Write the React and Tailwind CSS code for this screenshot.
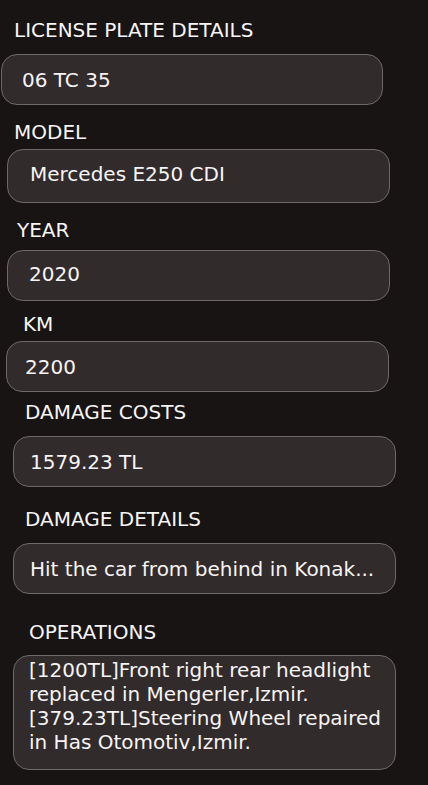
import React from 'react'

const fields = [
  { label: 'LICENSE PLATE DETAILS', value: '06 TC 35', labelCls: 'mt-[18px] ml-[14px]', boxCls: 'mt-[12px] ml-[1px] w-[382px] h-[51px] pl-[20px]' },
  { label: 'MODEL', value: 'Mercedes E250 CDI', labelCls: 'mt-[15px] ml-[14px]', boxCls: 'mt-[5px] ml-[7px] w-[383px] h-[54px] pl-[22px] pb-[4px]' },
  { label: 'YEAR', value: '2020', labelCls: 'mt-[15px] ml-[17px]', boxCls: 'mt-[8px] ml-[7px] w-[383px] h-[51px] pl-[21px] pb-[4px]' },
  { label: 'KM', value: '2200', labelCls: 'mt-[11px] ml-[23px]', boxCls: 'mt-[5px] ml-[6px] w-[383px] h-[51px] pl-[18px]' },
  { label: 'DAMAGE COSTS', value: '1579.23 TL', labelCls: 'mt-[8px] ml-[25px]', boxCls: 'mt-[12px] ml-[13px] w-[383px] h-[51px] pl-[16px]' },
  { label: 'DAMAGE DETAILS', value: 'Hit the car from behind in Konak...', labelCls: 'mt-[20px] ml-[25px]', boxCls: 'mt-[12px] ml-[13px] w-[383px] h-[51px] pl-[16px] pr-[8px]' },
]

export default function App() {
  return (
    <div className="min-h-screen bg-[#181414] text-[#f6f4f4] font-['DejaVu_Sans',sans-serif] text-[20px] leading-[24px] flex flex-col items-start pb-4">
      {fields.map((f) => (
        <React.Fragment key={f.label}>
          <div className={f.labelCls}>{f.label}</div>
          <div className={`${f.boxCls} flex items-center bg-[#322b2c] border border-[#6e6969] rounded-[16px]`}>
            <span className="whitespace-nowrap">{f.value}</span>
          </div>
        </React.Fragment>
      ))}

      {/* Operations */}
      <div className="mt-[26px] ml-[29px]">OPERATIONS</div>
      <div className="mt-[11px] ml-[13px] w-[383px] h-[115px] pl-[15px] pr-[10px] pt-[2px] bg-[#322b2c] border border-[#6e6969] rounded-[16px]">
        <p>[1200TL]Front right rear headlight replaced in Mengerler,Izmir.</p>
        <p>[379.23TL]Steering Wheel repaired in Has Otomotiv,Izmir.</p>
      </div>
    </div>
  )
}
